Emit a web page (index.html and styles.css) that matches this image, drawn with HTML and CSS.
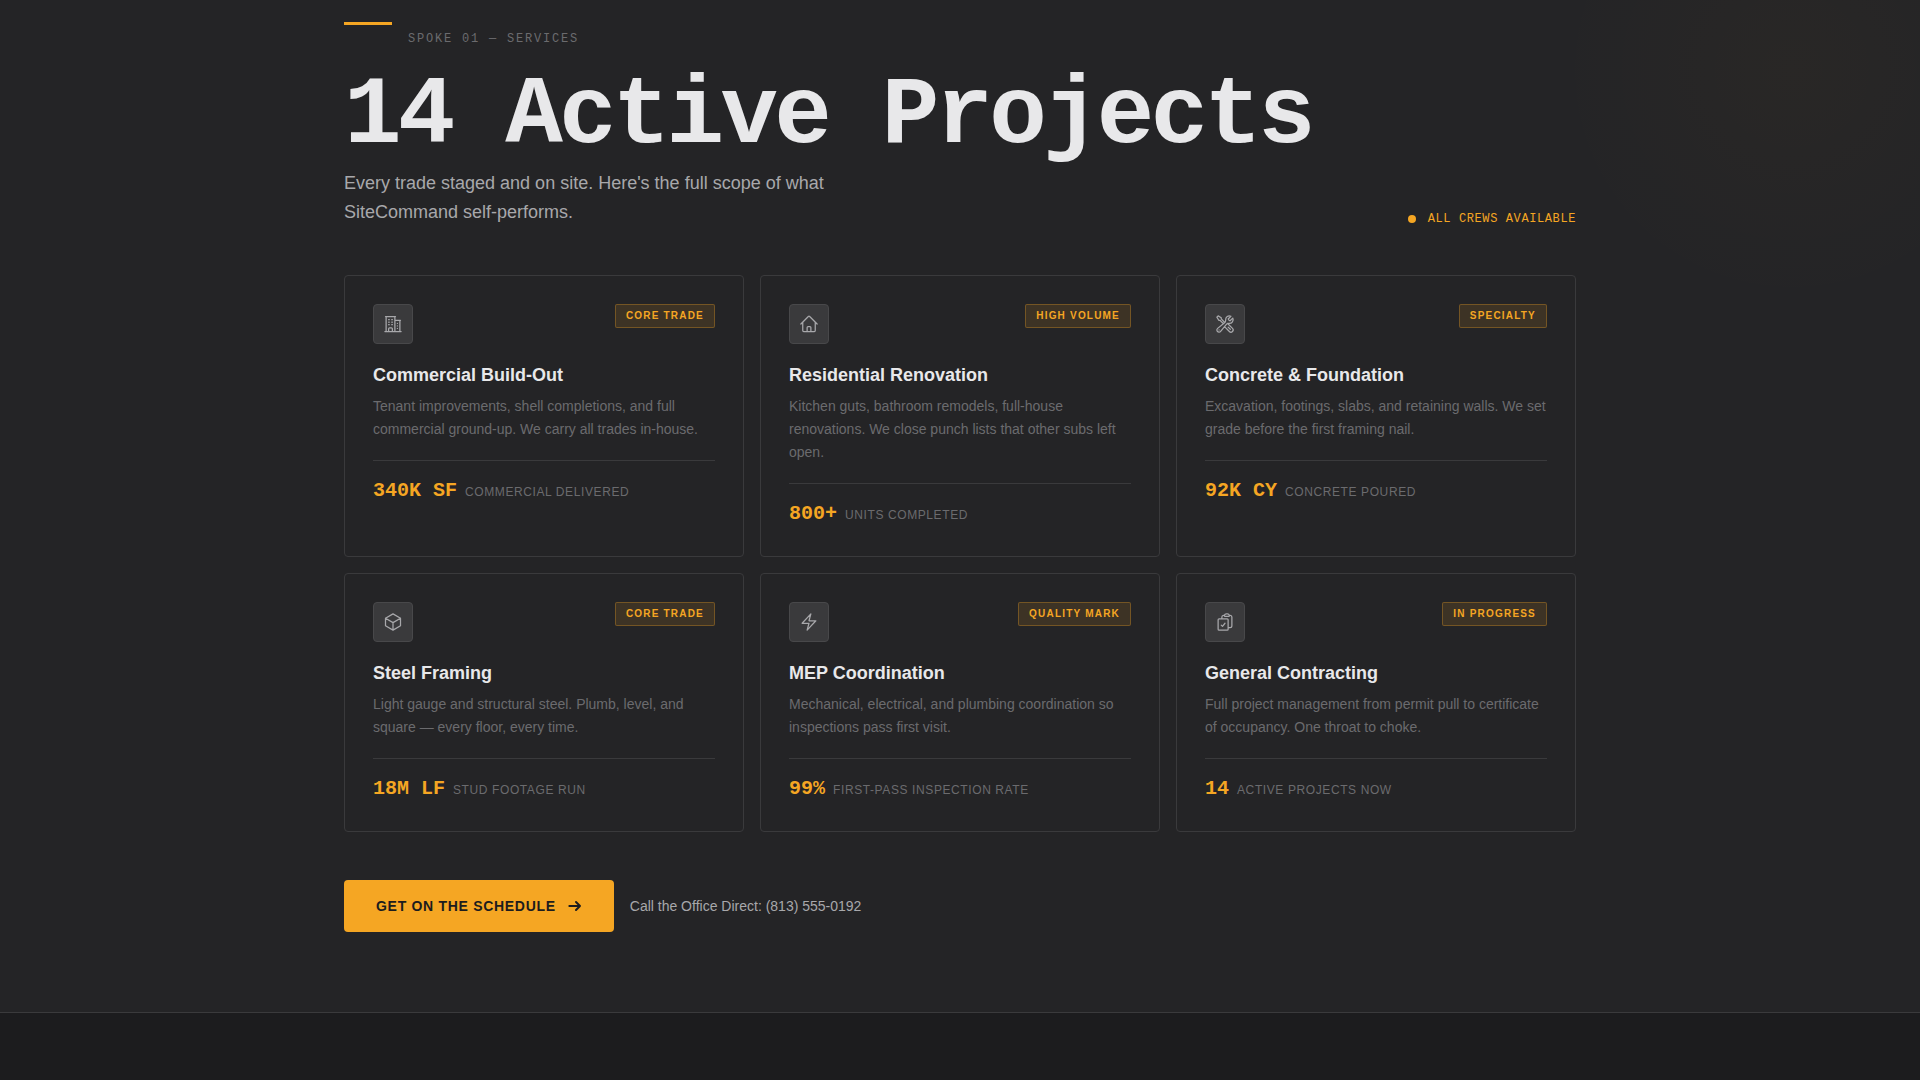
FILE: index.html
```html
<!DOCTYPE html>
<html lang="en">
<head>
    <meta charset="UTF-8">
    <meta name="viewport" content="width=device-width, initial-scale=1.0">
    <title>SiteCommand - Services</title>
    <link rel="stylesheet" href="styles.css">
</head>
<body>
    <section class="services">
        <div class="container">
            <header class="services-header">
                <div>
                    <div class="eyebrow">
                        <span class="accent-bar"></span>
                        <span class="eyebrow-text">SPOKE 01 — SERVICES</span>
                    </div>
                    <h1>14 Active Projects</h1>
                    <p class="lead">Every trade staged and on site. Here's the full scope of what SiteCommand self-performs.</p>
                </div>
                <div class="status"><span class="status-dot"></span>ALL CREWS AVAILABLE</div>
            </header>

            <div class="grid">
                <article class="card">
                    <div class="card-top">
                        <div class="card-icon">
                            <svg viewBox="0 0 24 24"><path d="M2.25 21h19.5m-18-18v18m10.5-18v18m6-13.5V21M6.75 6.75h.75m-.75 3h.75m-.75 3h.75m3-6h.75m-.75 3h.75m-.75 3h.75M6.75 21v-3.375c0-.621.504-1.125 1.125-1.125h2.25c.621 0 1.125.504 1.125 1.125V21M3 3h12m-.75 4.5H21m-3.75 3.75h.008v.008h-.008v-.008Zm0 3h.008v.008h-.008v-.008Zm0 3h.008v.008h-.008v-.008Z"/></svg>
                        </div>
                        <span class="badge">CORE TRADE</span>
                    </div>
                    <h2>Commercial Build-Out</h2>
                    <p class="desc">Tenant improvements, shell completions, and full commercial ground-up. We carry all trades in-house.</p>
                    <div class="stat"><span class="stat-value">340K SF</span><span class="stat-label">COMMERCIAL DELIVERED</span></div>
                </article>

                <article class="card">
                    <div class="card-top">
                        <div class="card-icon">
                            <svg viewBox="0 0 24 24"><path d="m2.25 12 8.954-8.955c.44-.439 1.152-.439 1.591 0L21.75 12M4.5 9.75v10.125c0 .621.504 1.125 1.125 1.125H9.75v-4.875c0-.621.504-1.125 1.125-1.125h2.25c.621 0 1.125.504 1.125 1.125V21h4.125c.621 0 1.125-.504 1.125-1.125V9.75M8.25 21h8.25"/></svg>
                        </div>
                        <span class="badge">HIGH VOLUME</span>
                    </div>
                    <h2>Residential Renovation</h2>
                    <p class="desc">Kitchen guts, bathroom remodels, full-house renovations. We close punch lists that other subs left open.</p>
                    <div class="stat"><span class="stat-value">800+</span><span class="stat-label">UNITS COMPLETED</span></div>
                </article>

                <article class="card">
                    <div class="card-top">
                        <div class="card-icon">
                            <svg viewBox="0 0 24 24"><path d="M11.42 15.17 17.25 21A2.652 2.652 0 0 0 21 17.25l-5.877-5.877M11.42 15.17l2.496-3.03c.317-.384.74-.626 1.208-.766M11.42 15.17l-4.655 5.653a2.548 2.548 0 1 1-3.586-3.586l6.837-5.63m5.108-.233c.55-.164 1.163-.188 1.743-.14a4.5 4.5 0 0 0 4.486-6.336l-3.276 3.277a3.004 3.004 0 0 1-2.25-2.25l3.276-3.276a4.5 4.5 0 0 0-6.336 4.486c.091 1.076-.071 2.264-.904 2.95l-.102.085m-1.745 1.437L5.909 7.5H4.5L2.25 3.75l1.5-1.5L7.5 4.5v1.409l4.26 4.26m-1.745 1.437 1.745-1.437m6.615 8.206L15.75 15.75M4.867 19.125h.008v.008h-.008v-.008Z"/></svg>
                        </div>
                        <span class="badge">SPECIALTY</span>
                    </div>
                    <h2>Concrete &amp; Foundation</h2>
                    <p class="desc">Excavation, footings, slabs, and retaining walls. We set grade before the first framing nail.</p>
                    <div class="stat"><span class="stat-value">92K CY</span><span class="stat-label">CONCRETE POURED</span></div>
                </article>

                <article class="card">
                    <div class="card-top">
                        <div class="card-icon">
                            <svg viewBox="0 0 24 24"><path d="m21 7.5-9-5.25L3 7.5m18 0-9 5.25m9-5.25v9l-9 5.25M3 7.5l9 5.25M3 7.5v9l9 5.25m0-9v9"/></svg>
                        </div>
                        <span class="badge">CORE TRADE</span>
                    </div>
                    <h2>Steel Framing</h2>
                    <p class="desc">Light gauge and structural steel. Plumb, level, and square — every floor, every time.</p>
                    <div class="stat"><span class="stat-value">18M LF</span><span class="stat-label">STUD FOOTAGE RUN</span></div>
                </article>

                <article class="card">
                    <div class="card-top">
                        <div class="card-icon">
                            <svg viewBox="0 0 24 24"><path d="m3.75 13.5 10.5-11.25L12 10.5h8.25L9.75 21.75 12 13.5H3.75Z"/></svg>
                        </div>
                        <span class="badge">QUALITY MARK</span>
                    </div>
                    <h2>MEP Coordination</h2>
                    <p class="desc">Mechanical, electrical, and plumbing coordination so inspections pass first visit.</p>
                    <div class="stat"><span class="stat-value">99%</span><span class="stat-label">FIRST-PASS INSPECTION RATE</span></div>
                </article>

                <article class="card">
                    <div class="card-top">
                        <div class="card-icon">
                            <svg viewBox="0 0 24 24"><path d="M11.35 3.836c-.065.21-.1.433-.1.664 0 .414.336.75.75.75h4.5a.75.75 0 0 0 .75-.75 2.25 2.25 0 0 0-.1-.664m-5.8 0A2.251 2.251 0 0 1 13.5 2.25H15c1.012 0 1.867.668 2.15 1.586m-5.8 0c-.376.023-.75.05-1.124.08C9.095 4.01 8.25 4.973 8.25 6.108V8.25m8.9-4.414c.376.023.75.05 1.124.08 1.131.094 1.976 1.057 1.976 2.192V16.5A2.25 2.25 0 0 1 18 18.75h-2.25m-7.5-10.5H4.875c-.621 0-1.125.504-1.125 1.125v11.25c0 .621.504 1.125 1.125 1.125h9.75c.621 0 1.125-.504 1.125-1.125V18.75m-7.5-10.5h6.375c.621 0 1.125.504 1.125 1.125v9.375m-8.25-3 1.5 1.5 3-3.75"/></svg>
                        </div>
                        <span class="badge">IN PROGRESS</span>
                    </div>
                    <h2>General Contracting</h2>
                    <p class="desc">Full project management from permit pull to certificate of occupancy. One throat to choke.</p>
                    <div class="stat"><span class="stat-value">14</span><span class="stat-label">ACTIVE PROJECTS NOW</span></div>
                </article>
            </div>

            <div class="cta">
                <a href="#schedule" class="btn">
                    GET ON THE SCHEDULE
                    <svg viewBox="0 0 24 24"><path d="M5 12h16m-6-6 6 6-6 6"/></svg>
                </a>
                <a href="tel:8135550192" class="call-link">Call the Office Direct: (813) 555-0192</a>
            </div>
        </div>
    </section>
</body>
</html>
```
FILE: styles.css
```css
* {
    box-sizing: border-box;
}
body {
    margin: 0;
    background-color: #1c1c1e;
    color: #e8e8ea;
    font-family: "Liberation Sans", Arial, sans-serif;
}
h1, h2, p {
    margin: 0;
}
.services {
    padding: 22px 0 80px;
    border-bottom: 1px solid #3a3a3c;
    background-color: #242426;
    /* faint amber glow in the top right corner */
    background-image: radial-gradient(circle 240px at calc(100% - 128px) 70px, rgba(245, 166, 35, 0.025), transparent);
}
.container {
    max-width: 1280px;
    margin: 0 auto;
    padding: 0 24px;
}
.services-header {
    display: flex;
    justify-content: space-between;
    align-items: flex-end;
    margin-bottom: 48px;
}
.eyebrow {
    display: flex;
    align-items: flex-start;
    gap: 16px;
    margin-bottom: 25px;
}
.accent-bar {
    width: 48px;
    height: 3px;
    background-color: #f5a623;
}
.eyebrow-text {
    margin-top: 9px;
    font-family: "Liberation Mono", "Courier New", monospace;
    font-size: 12px;
    line-height: 16px;
    letter-spacing: 0.15em;
    color: #6b6b6e;
}
h1 {
    font-family: "Liberation Mono", "Courier New", monospace;
    font-size: 96px;
    line-height: 89px;
    letter-spacing: -0.04em;
}
.lead {
    max-width: 520px;
    margin-top: 8px;
    font-size: 18px;
    line-height: 29px;
    color: #a8a8ab;
}
.status {
    display: flex;
    align-items: center;
    gap: 12px;
    font-family: "Liberation Mono", "Courier New", monospace;
    font-size: 12px;
    line-height: 16px;
    letter-spacing: 0.05em;
    white-space: nowrap;
    color: #f5a623;
}
.status-dot {
    width: 8px;
    height: 8px;
    border-radius: 50%;
    background-color: #f5a623;
}
.grid {
    display: grid;
    grid-template-columns: repeat(3, 1fr);
    gap: 16px;
}
.card {
    padding: 28px;
    border: 1px solid #3a3a3c;
    border-radius: 4px;
    background-color: #242426;
}
.card-top {
    display: flex;
    justify-content: space-between;
    align-items: flex-start;
    margin-bottom: 20px;
}
.card-icon {
    display: flex;
    align-items: center;
    justify-content: center;
    width: 40px;
    height: 40px;
    border: 1px solid #48484a;
    border-radius: 4px;
    background-color: #3a3a3c;
}
.card-icon svg {
    width: 20px;
    height: 20px;
}
svg {
    fill: none;
    stroke: #a8a8ab;
    stroke-width: 1.5;
    stroke-linecap: round;
    stroke-linejoin: round;
}
.badge {
    padding: 4px 10px;
    border: 1px solid rgba(245, 166, 35, 0.3);
    border-radius: 2px;
    background-color: rgba(245, 166, 35, 0.12);
    font-size: 10px;
    font-weight: bold;
    line-height: 14px;
    letter-spacing: 0.12em;
    color: #f5a623;
}
.card h2 {
    margin-bottom: 9px;
    font-size: 18px;
    line-height: 22px;
}
.desc {
    margin-bottom: 19px;
    font-size: 14px;
    line-height: 23px;
    color: #6b6b6e;
}
.stat {
    display: flex;
    align-items: baseline;
    gap: 8px;
    padding-top: 17px;
    border-top: 1px solid #3a3a3c;
    line-height: 26px;
}
.stat-value {
    font-family: "Liberation Mono", "Courier New", monospace;
    font-size: 20px;
    font-weight: bold;
    color: #f5a623;
}
.stat-label {
    font-size: 12px;
    letter-spacing: 0.05em;
    color: #6b6b6e;
}
.cta {
    display: flex;
    align-items: center;
    gap: 16px;
    margin-top: 48px;
}
.btn {
    display: flex;
    align-items: center;
    gap: 10px;
    padding: 16px 32px;
    border-radius: 4px;
    background-color: #f5a623;
    font-size: 14px;
    font-weight: bold;
    line-height: 20px;
    letter-spacing: 0.05em;
    text-decoration: none;
    color: #1c1c1e;
}
.btn svg {
    width: 16px;
    height: 16px;
    stroke: #1c1c1e;
    stroke-width: 3;
}
.call-link {
    font-size: 14px;
    text-decoration: none;
    color: #a8a8ab;
}
@media (max-width: 960px) {
    h1 {
        font-size: 48px;
        line-height: 52px;
    }
    .grid {
        grid-template-columns: 1fr;
    }
}
```
